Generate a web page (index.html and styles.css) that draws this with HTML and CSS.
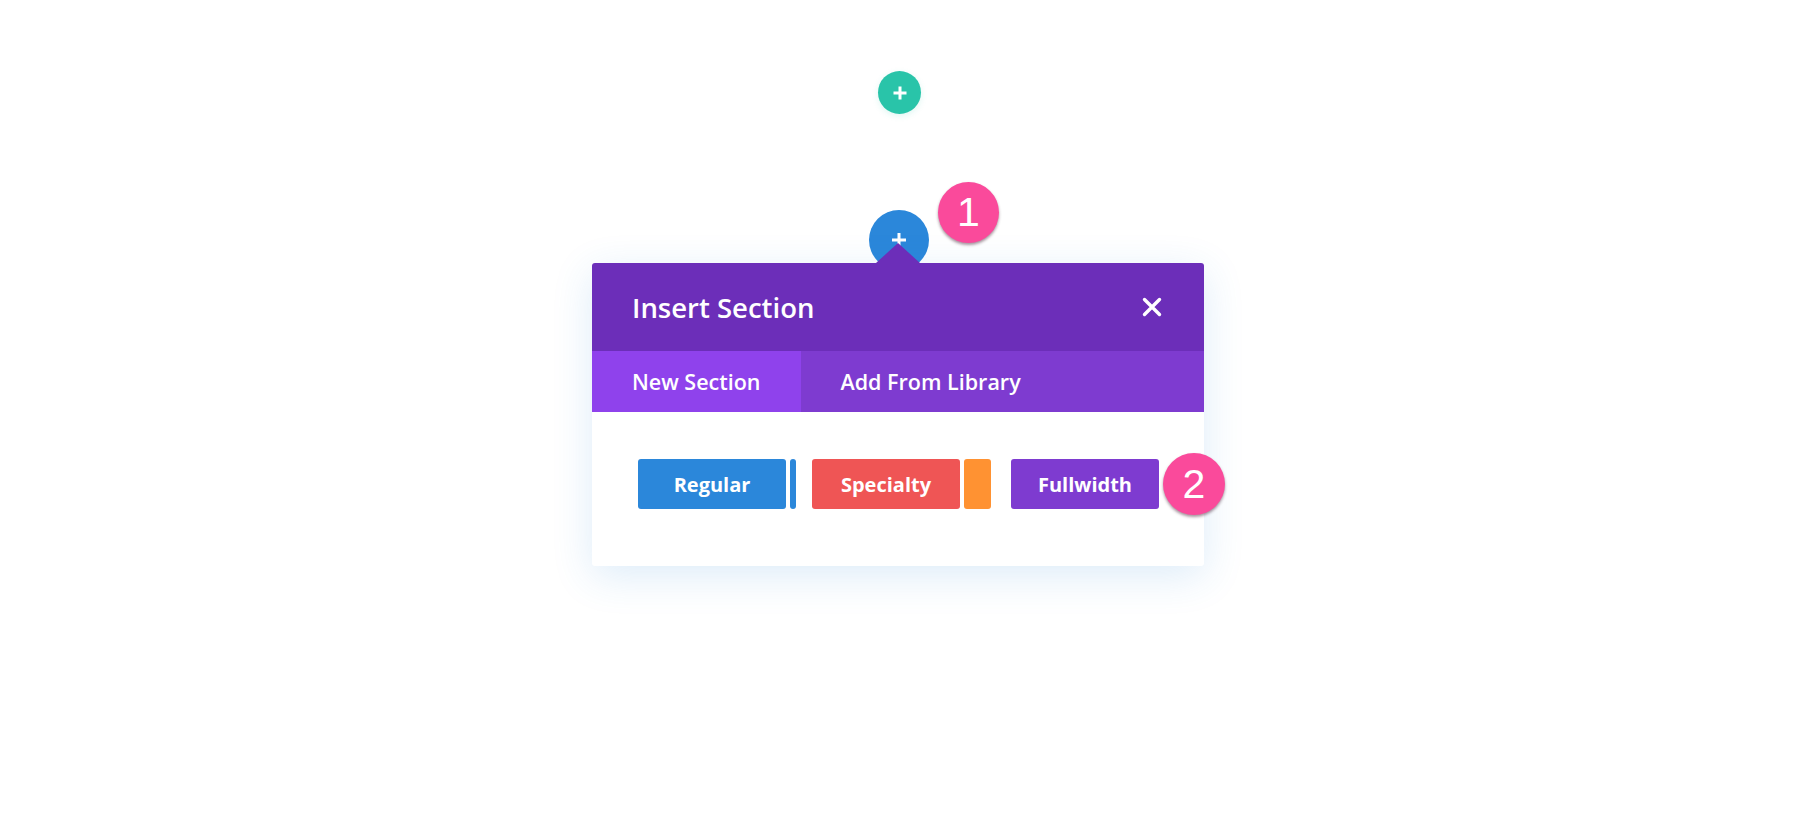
FILE: index.html
```html
<!DOCTYPE html>
<html lang="en">
<head>
<meta charset="utf-8">
<title>Insert Section</title>
<link rel="stylesheet" href="styles.css">
</head>
<body>
<div class="stage">
  <div class="add add-green">
    <svg width="16" height="16" viewBox="0 0 16 16"><path d="M8 1.5v13M1.5 8h13" stroke="#fff" stroke-width="3" stroke-linecap="butt"/></svg>
  </div>
  <div class="insert">
    <div class="add add-blue">
      <svg width="16" height="16" viewBox="0 0 16 16"><path d="M8 1v14M1 8h14" stroke="#fff" stroke-width="3"/></svg>
    </div>
    <span class="badge badge-one">1</span>
    <div class="modal">
      <span class="arrow"></span>
      <div class="modal-header">
        <h1 class="modal-title">Insert Section</h1>
        <svg class="close" width="20" height="20" viewBox="0 0 20 20"><path d="M2.5 2.5l15 15M17.5 2.5l-15 15" stroke="#fff" stroke-width="3.4" stroke-linecap="round"/></svg>
      </div>
      <div class="tabs">
        <div class="tab tab-active">New Section</div>
        <div class="tab">Add From Library</div>
      </div>
      <div class="modal-body">
        <div class="group group-regular">
          <div class="btn btn-blue">Regular</div>
          <span class="side side-blue"></span>
        </div>
        <div class="group group-specialty">
          <div class="btn btn-red">Specialty</div>
          <span class="side side-orange"></span>
        </div>
        <div class="group group-full">
          <div class="btn btn-purple">Fullwidth</div>
          <span class="badge badge-two">2</span>
        </div>
      </div>
    </div>
  </div>
</div>
</body>
</html>
```

FILE: styles.css
```css
* { box-sizing: border-box; }
html, body { margin: 0; padding: 0; background: #fff; }
body {
  width: 1800px;
  height: 831px;
  overflow: hidden;
  font-family: "Open Sans", "Noto Sans", sans-serif;
}
.stage {
  display: flex;
  flex-direction: column;
  padding-top: 71px;
  padding-left: 592px;
}
.add {
  border-radius: 50%;
  display: flex;
  align-items: center;
  justify-content: center;
}
.add-green {
  width: 43px;
  height: 43px;
  background: #29c4a9;
  margin-left: 286px;
  box-shadow: 0 2px 6px rgba(41, 196, 169, 0.15);
}
.insert {
  position: relative;
  width: 612px;
  margin-top: 96px;
  display: flex;
  flex-direction: column;
}
.add-blue {
  width: 60px;
  height: 60px;
  background: #2b87da;
  margin-left: 277px;
  align-items: flex-start;
  padding-top: 22px;
}
.badge {
  position: absolute;
  width: 61px;
  height: 61px;
  border-radius: 50%;
  background: #fa4a9b;
  color: #fff;
  font-family: "Liberation Sans", Arial, sans-serif;
  font-size: 41px;
  line-height: 61px;
  text-align: center;
  box-shadow: 0 2px 3px rgba(60, 20, 40, 0.45);
  z-index: 3;
}
.badge-one {
  left: 346px;
  top: -28px;
}
.modal {
  position: relative;
  z-index: 2;
  margin-top: -7px;
  background: #fff;
  border-radius: 3px;
  box-shadow: 0 10px 40px rgba(43, 135, 218, 0.16);
}
.arrow {
  position: absolute;
  left: 284px;
  top: -20px;
  width: 0;
  height: 0;
  border-left: 22px solid transparent;
  border-right: 22px solid transparent;
  border-bottom: 20px solid #6c2eb9;
}
.modal-header {
  height: 88px;
  background: #6c2eb9;
  border-radius: 3px 3px 0 0;
  display: flex;
  align-items: center;
  justify-content: space-between;
  padding: 0 42px 0 40px;
}
.modal-title {
  margin: 0;
  color: #fff;
  font-size: 27.5px;
  font-weight: 600;
  letter-spacing: 0;
}
.tabs {
  display: flex;
  height: 61px;
  background: #7e3bd0;
}
.tab {
  display: flex;
  align-items: center;
  padding: 0 40px;
  color: #fff;
  font-size: 21.5px;
  font-weight: 600;
}
.tab-active {
  background: #8f42ec;
}
.modal-body {
  display: flex;
  padding: 47px 46px 57px;
}
.group {
  position: relative;
  display: flex;
  gap: 4px;
}
.group-regular { margin-right: 16px; }
.group-specialty { margin-right: 20px; }
.btn {
  width: 148px;
  height: 50px;
  border-radius: 3px;
  display: flex;
  align-items: center;
  justify-content: center;
  color: #fff;
  font-size: 20px;
  font-weight: 700;
}
.btn-blue { background: #2b87da; }
.btn-red { background: #ef5555; }
.btn-purple { background: #7e3bd0; }
.side {
  height: 50px;
  border-radius: 3px;
}
.side-blue { width: 6px; background: #2b87da; }
.side-orange { width: 27px; background: #ff9232; }
.badge-two {
  left: 152px;
  top: -6px;
  width: 62px;
  height: 62px;
  line-height: 62px;
}
```
